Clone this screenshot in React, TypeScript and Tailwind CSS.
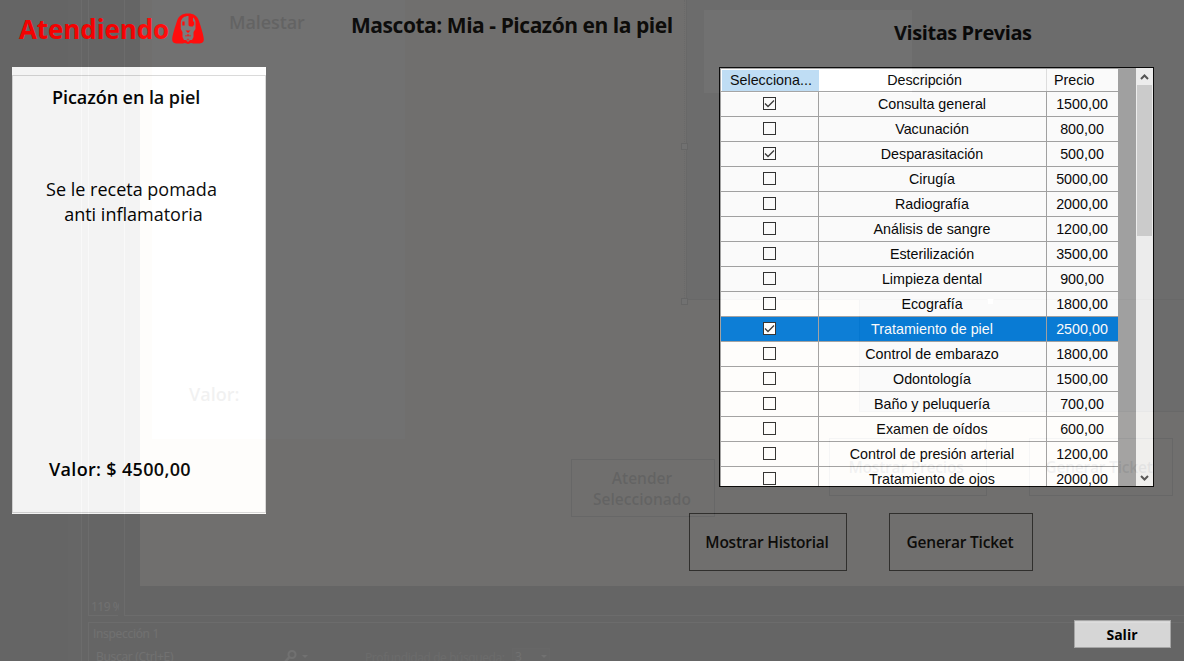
const services = [
  { name: "Consulta general", price: "1500,00", checked: true },
  { name: "Vacunación", price: "800,00" },
  { name: "Desparasitación", price: "500,00", checked: true },
  { name: "Cirugía", price: "5000,00" },
  { name: "Radiografía", price: "2000,00" },
  { name: "Análisis de sangre", price: "1200,00" },
  { name: "Esterilización", price: "3500,00" },
  { name: "Limpieza dental", price: "900,00" },
  { name: "Ecografía", price: "1800,00" },
  { name: "Tratamiento de piel", price: "2500,00", checked: true, selected: true },
  { name: "Control de embarazo", price: "1800,00" },
  { name: "Odontología", price: "1500,00" },
  { name: "Baño y peluquería", price: "700,00" },
  { name: "Examen de oídos", price: "600,00" },
  { name: "Control de presión arterial", price: "1200,00" },
  { name: "Tratamiento de ojos", price: "2000,00" },
];

function DogIcon() {
  return (
    <svg width="32" height="32" viewBox="0 0 32 32" className="shrink-0">
      <path
        fill="#ff0000"
        d="M16 0.5C22 0.5 25.5 3 27 8C28.5 13 31.8 22 31.8 26.5C31.8 29.5 29.5 30.500 26.5 30.500H21.5L19 30L16 31L13 30L10.500 30.500H5.500C2.500 30.500 0.200 29.500 0.200 26.500C0.200 22 3.500 13 5 8C6.500 3 10 0.500 16 0.500Z"
      />
      {/* face */}
      <path
        fill="#747474"
        d="M16.500 3C12.500 3 9.500 5 8.800 9V16L10.500 19V24L12 27L14 27L16 25L18 27H20L21.500 24V19L23.500 16V9C23.200 7 22.500 5.500 21 4.500V13.500H18.500C17.200 13.500 16.500 12.500 16.500 11.500Z"
      />
      {/* eyes, nose and mouth */}
      <path
        fill="#ff0000"
        d="M10.300 8.500H12.600V12.500H10.300ZM21 8.500H22.200V12.500H21ZM13.500 17.500H18.500L16 20ZM13 22.500H15.500V21H16.500V22.500H19V23.200H13Z"
      />
      <path fill="#747474" d="M16 24.700L18.200 26.800L16 28.900L13.800 26.800Z" />
      <path fill="#ff0000" d="M16 26L16.900 26.800L16 27.600L15.100 26.800Z" />
    </svg>
  );
}

function Check({ checked }: { checked?: boolean }) {
  return (
    <svg width="13" height="13" viewBox="0 0 13 13" className="mt-[-1px]">
      <rect x="0.5" y="0.5" width="12" height="12" fill="#fff" stroke="#2c2c2c" />
      {checked && <path d="M2 6.500L5 9.500L11 3.500" fill="none" stroke="#333" strokeWidth="1.300" />}
    </svg>
  );
}

function ServiceTable() {
  return (
    <div className="ml-[30px] flex h-[420px] w-[435px] shrink-0 overflow-hidden border border-black bg-[#a0a0a0] font-['Liberation_Sans',sans-serif] text-[14.3px] text-black">
      <div className="w-[398px] pl-px pt-px">
        <div className="flex h-[22px] bg-white">
          <div className="ml-px mt-px w-[97px] bg-[#bcdcf4] pl-2 leading-[20px]">Selecciona...</div>
          <div className="w-[227px] pr-4 text-center leading-[22px]">Descripción</div>
          <div className="w-px bg-[#e0e0e0]" />
          <div className="pl-[7px] leading-[22px]">Precio</div>
        </div>
        {services.map((s) => (
          <div key={s.name} className={s.selected ? "mt-px flex h-6 gap-px text-white" : "mt-px flex h-6 gap-px"}>
            {[
              { w: "w-[97px]", c: <Check checked={s.checked} /> },
              { w: "w-[227px]", c: <span className="mr-px mt-[2px]">{s.name}</span> },
              { w: "w-[71px]", c: <span className="mr-px mt-[2px]">{s.price}</span> },
            ].map((cell) => (
              <div
                key={cell.w}
                className={`${cell.w} flex shrink-0 items-center justify-center whitespace-nowrap ${s.selected ? "bg-[#0078d7]" : "bg-white"}`}
              >
                {cell.c}
              </div>
            ))}
          </div>
        ))}
      </div>
      <div className="w-[18px]" />
      <div className="flex grow flex-col items-center justify-between bg-[#f0f0f0]">
        <svg width="17" height="17" viewBox="0 0 17 17">
          <path d="M5 11L8.500 7.500L12 11" fill="none" stroke="#505050" strokeWidth="2" />
        </svg>
        <div className="h-[151px] w-[15px] bg-[#cdcdcd]" />
        <div className="grow" />
        <svg width="17" height="17" viewBox="0 0 17 17">
          <path d="M5 7L8.500 10.500L12 7" fill="none" stroke="#505050" strokeWidth="2" />
        </svg>
      </div>
    </div>
  );
}

/* Desktop contents that show faintly through the translucent window. */
function SeeThrough() {
  return (
    <div className="pointer-events-none absolute inset-0 overflow-hidden bg-[#2a2a2a] font-semibold text-black opacity-5">
      <div className="absolute left-[68px] top-0 h-full w-[13px] bg-[#353535]" />
      <div className="absolute left-[81px] top-0 h-full w-px bg-[#a0a0a0]" />
      <div className="absolute left-[88px] top-[-1px] h-[617px] w-[30px] border border-r-0 border-[#a0a0a0]" />
      <div className="absolute left-[124px] top-[-1px] h-[617px] w-[1100px] border border-[#a0a0a0]" />
      <div className="absolute left-[88px] top-[622px] h-[60px] w-[1100px] border border-[#a0a0a0]" />
      <div className="absolute left-[91px] top-[599px] w-[28px] overflow-hidden whitespace-nowrap text-xs font-normal tracking-[-0.5px] text-white">119 %</div>
      <div className="absolute left-[93px] top-[626px] text-xs font-normal tracking-[-0.3px] text-white">Inspección 1</div>
      <div className="absolute left-[96px] top-[649px] text-xs font-normal tracking-[-0.3px] text-white">Buscar (Ctrl+E)</div>
      <div className="absolute left-[365px] top-[650px] whitespace-nowrap text-xs font-normal tracking-[-0.4px] text-[#999]">Profundidad de búsqueda:</div>
      <div className="absolute left-[512px] top-[648px] h-6 w-[38px] border border-[#555] bg-[#333] pl-[2px] text-xs font-normal text-white">3</div>
      <svg className="absolute left-[540px] top-[655px]" width="8" height="4" viewBox="0 0 8 4">
        <path d="M1 0H7L4 3Z" fill="#fff" />
      </svg>
      <svg className="absolute left-[284px] top-[650px]" width="26" height="14" viewBox="0 0 26 14">
        <circle cx="8" cy="4.500" r="3.500" fill="none" stroke="#fff" strokeWidth="2" />
        <path d="M5.500 7L1 12" stroke="#fff" strokeWidth="2.500" />
        <path d="M18 5H24L21 8Z" fill="#fff" />
      </svg>
      <div className="absolute left-[140px] top-0 h-[586px] w-[1044px] bg-[#fae6c8]" />
      <div className="absolute left-[152px] top-0 h-[439px] w-[253px] bg-white" />
      <div className="absolute left-[229px] top-[10px] text-[18px] leading-[24px] tracking-[-0.1px]">Malestar</div>
      <div className="absolute left-[189px] top-[382px] text-[18px] leading-[24px]">Valor:</div>
      <div className="absolute left-[684px] top-0 h-[302px] border-l border-dotted border-[#777]" />
      <div className="absolute left-[686px] top-[-1px] h-[301px] w-[500px] border border-[#666] bg-[#ababab]" />
      <div className="absolute left-[704px] top-[10px] h-[83px] w-[208px] bg-white" />
      <div className="absolute left-[859px] top-[299px] h-[113px] w-[330px] border border-[#666] bg-[#b0b0b0]" />
      <div className="absolute left-[681px] top-[143px] h-[7px] w-[7px] border border-[#444] bg-white" />
      <div className="absolute left-[681px] top-[298px] h-[7px] w-[7px] border border-[#444] bg-white" />
      <div className="absolute left-[987px] top-[298px] h-[7px] w-[7px] border border-[#aaa] bg-white" />
      <div className="absolute left-[571px] top-[459px] flex h-[58px] w-[144px] items-center justify-center border border-[#555] pr-[2px] pt-[2px] text-center text-[15.5px] leading-[21px]">
        Atender
        <br />
        Seleccionado
      </div>
      <div className="absolute left-[829px] top-[438px] flex h-[58px] w-[158px] items-center justify-center border border-[#555] pr-1 pt-[2px] text-[15.5px] tracking-[-0.2px]">
        Mostrar Precios
      </div>
      <div className="absolute left-[1029px] top-[438px] flex h-[58px] w-[144px] items-center justify-center border border-[#555] pr-1 pt-[2px] text-[15.5px] tracking-[-0.2px]">
        Generar Ticket
      </div>
    </div>
  );
}

export default function App() {
  return (
    <div className="relative flex h-[661px] w-[1184px] overflow-hidden bg-[#696969] font-['Open_Sans',sans-serif] text-black">
      <aside className="flex w-[266px] shrink-0 flex-col pl-3">
        <header className="flex h-[67px] gap-1 pl-[7px] pt-[13px] text-[26px] font-bold leading-[33px] text-[#ff0000]">
          <span className="w-[149px] whitespace-nowrap tracking-[-0.1px]">Atendiendo</span>
          <DogIcon />
        </header>
        <section className="h-[447px] bg-white pt-2">
          <div className="flex h-[438px] flex-col border border-[#d8d8d8]">
            <h2 className="ml-[39px] mt-2 whitespace-nowrap text-[18px] font-semibold leading-[26px] tracking-[-0.07px]">Picazón en la piel</h2>
            <p className="mr-[15px] mt-[67px] whitespace-nowrap text-center text-[18px] leading-[25px]">
              Se le receta pomada
              <br />
              <span className="ml-1">anti inflamatoria</span>
            </p>
            <p className="ml-9 mt-[229px] whitespace-nowrap text-[18px] font-semibold leading-[26px] tracking-[0.33px]">Valor: $ 4500,00</p>
          </div>
        </section>
      </aside>
      <main className="w-[423px] shrink-0 pl-[85px] pt-[10px]">
        <h1 className="whitespace-nowrap text-[21px] font-bold leading-[30px] tracking-[-0.46px]">Mascota: Mia - Picazón en la piel</h1>
      </main>
      <section className="flex grow flex-col">
        <h1 className="mt-[18px] mb-[19px] pl-[205px] text-[20px] font-bold leading-[30px] tracking-[-0.43px]">Visitas Previas</h1>
        <ServiceTable />
        <div className="mt-[26px] flex gap-[42px] text-[15.5px] font-semibold tracking-[-0.23px]">
          <button className="h-[58px] w-[158px] whitespace-nowrap border border-[#252525] pr-[2px] pt-[2px]">Mostrar Historial</button>
          <button className="h-[58px] w-[144px] whitespace-nowrap border border-[#252525] pr-[2px] pt-[2px]">Generar Ticket</button>
        </div>
        <button className="mr-[13px] mt-[49px] h-7 w-[97px] self-end border border-[#adadad] bg-[#e1e1e1] pr-px pt-[2px] text-[14px] font-bold leading-[24px]">
          Salir
        </button>
      </section>
      <SeeThrough />
    </div>
  );
}
